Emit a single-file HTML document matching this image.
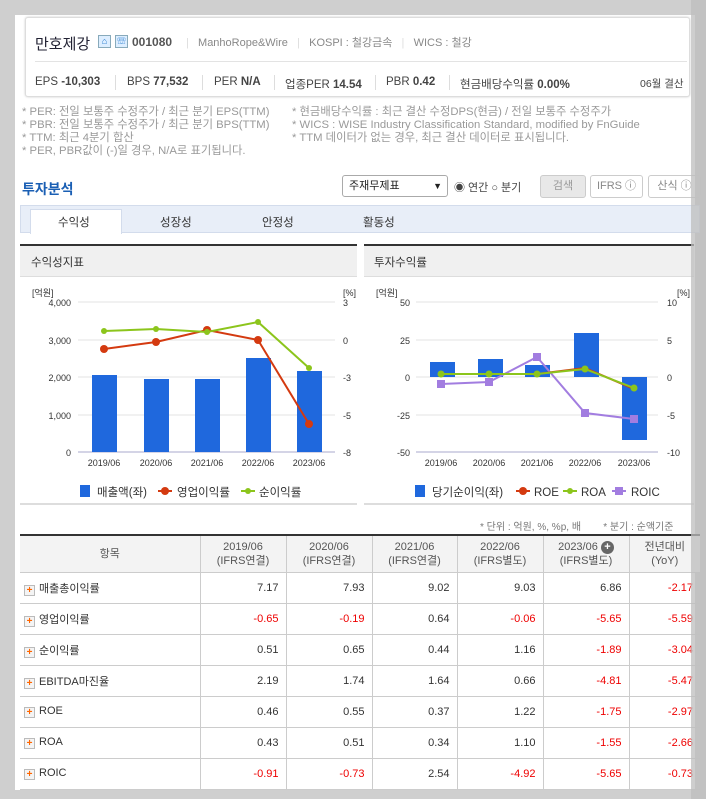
<!DOCTYPE html>
<html><head><meta charset="utf-8"><style>
*{margin:0;padding:0;box-sizing:border-box}
body{width:706px;height:799px;background:#cfcfcf;position:relative;overflow:hidden;font-family:"Liberation Sans","Noto Sans CJK KR",sans-serif;color:#333}
.a{position:absolute;white-space:nowrap}
#wrap{position:absolute;left:15px;top:15px;width:680px;height:775px;background:#fff}
.card{position:absolute;left:25px;top:17px;width:665px;height:80px;border:1px solid #ddd;border-radius:3px;background:#fff;box-shadow:0 0 2px #ccc}
.note{font-size:11.3px;color:#999}
.sep{position:absolute;top:75px;width:1px;height:15px;background:#ddd}
.st{position:absolute;top:76px;font-size:11.5px;color:#444;white-space:nowrap}
table{border-collapse:collapse;position:absolute;left:20px;top:536px;width:680px;font-size:11px}
th{background:#f3f3f3;font-weight:normal;color:#555;border-left:1px solid #ccc;border-bottom:1px solid #ccc;height:36px;line-height:14px}
td{border-left:1px solid #ccc;border-bottom:1px solid #ccc;height:31px;text-align:right;padding-right:7px;color:#333}
td:first-child,th:first-child{border-left:none}
td:first-child{text-align:left;padding-left:4px}
.r{color:#e00}
.pl{display:inline-block;width:11px;height:11px;border:1px solid #bbb;background:#f4f4f4;color:#f60;font-size:10px;line-height:9px;text-align:center;font-weight:bold;margin-right:4px;vertical-align:-1px}
</style></head><body>
<div id="wrap"></div>
<div class="card"></div>
<div class="a" style="left:35px;top:33px;font-size:15px;color:#223">만호제강</div>
<div class="a" style="left:98px;top:35px;width:13px;height:13px;border:1px solid #8ab;background:#def;font-size:9px;color:#27c;text-align:center;line-height:11px">⌂</div>
<div class="a" style="left:115px;top:35px;width:13px;height:13px;border:1px solid #8ab;background:#def;font-size:9px;color:#27c;text-align:center;line-height:11px">☏</div>
<div class="a" style="left:132px;top:35px;font-size:12px;font-weight:bold;color:#555">001080</div>
<div class="a" style="left:186px;top:34px;font-size:11px;color:#888"><span style="color:#ddd">|</span>&nbsp;&nbsp; ManhoRope&amp;Wire &nbsp;&nbsp;<span style="color:#ddd">|</span>&nbsp;&nbsp; KOSPI : 철강금속 &nbsp;&nbsp;<span style="color:#ddd">|</span>&nbsp;&nbsp; WICS : 철강</div>
<div class="a" style="left:35px;top:61px;width:652px;height:1px;background:#e3e3e3"></div>
<div class="st" style="left:35px">EPS <b>-10,303</b></div>
<div class="sep" style="left:115px"></div>
<div class="st" style="left:127px">BPS <b>77,532</b></div>
<div class="sep" style="left:202px"></div>
<div class="st" style="left:214px">PER <b>N/A</b></div>
<div class="sep" style="left:274px"></div>
<div class="st" style="left:285px">업종PER <b>14.54</b></div>
<div class="sep" style="left:375px"></div>
<div class="st" style="left:386px">PBR <b>0.42</b></div>
<div class="sep" style="left:449px"></div>
<div class="st" style="left:460px">현금배당수익률 <b>0.00%</b></div>
<div class="a" style="left:640px;top:76px;font-size:10.5px;color:#444">06월 결산</div>
<div class="a note" style="left:22px;top:106px;line-height:13px">* PER: 전일 보통주 수정주가 / 최근 분기 EPS(TTM)<br>* PBR: 전일 보통주 수정주가 / 최근 분기 BPS(TTM)<br>* TTM: 최근 4분기 합산<br>* PER, PBR값이 (-)일 경우, N/A로 표기됩니다.</div>
<div class="a note" style="left:292px;top:106px;line-height:13px">* 현금배당수익률 : 최근 결산 수정DPS(현금) / 전일 보통주 수정주가<br>* WICS : WISE Industry Classification Standard, modified by FnGuide<br>* TTM 데이터가 없는 경우, 최근 결산 데이터로 표시됩니다.</div>
<div class="a" style="left:22px;top:179px;font-size:14px;font-weight:bold;color:#1a5fb4">투자분석</div>
<div class="a" style="left:342px;top:175px;width:106px;height:22px;border:1px solid #aaa;border-radius:3px;font-size:11px;line-height:20px;padding-left:6px;color:#222">주재무제표<span style="position:absolute;right:5px;font-size:9px">▼</span></div>
<div class="a" style="left:454px;top:179px;font-size:11px;color:#444">◉ 연간 ○ 분기</div>
<div class="a" style="left:540px;top:175px;width:46px;height:23px;border:1px solid #ccc;border-radius:3px;background:#e8e8e8;font-size:11px;color:#999;text-align:center;line-height:21px">검색</div>
<div class="a" style="left:590px;top:175px;width:53px;height:23px;border:1px solid #ccc;border-radius:3px;font-size:11px;color:#888;text-align:center;line-height:21px">IFRS ⓘ</div>
<div class="a" style="left:648px;top:175px;width:53px;height:23px;border:1px solid #ccc;border-radius:3px;font-size:11px;color:#888;text-align:center;line-height:21px">산식 ⓘ</div>
<div class="a" style="left:20px;top:205px;width:680px;height:28px;background:#e8eef8;border:1px solid #d3dcec"></div>
<div class="a" style="left:30px;top:209px;width:92px;height:25px;background:#fff;border:1px solid #d3dcec;border-bottom:none"></div>
<div class="a" style="left:58px;top:214px;font-size:11.5px">수익성</div>
<div class="a" style="left:160px;top:214px;font-size:11.5px">성장성</div>
<div class="a" style="left:262px;top:214px;font-size:11.5px">안정성</div>
<div class="a" style="left:363px;top:214px;font-size:11.5px">활동성</div>
<div class="a" style="left:20px;top:244px;width:337px;height:33px;background:#f0f0f0;border-top:2px solid #333;border-bottom:1px solid #ddd"></div>
<div class="a" style="left:31px;top:254px;font-size:11.5px;color:#333">수익성지표</div>
<div class="a" style="left:364px;top:244px;width:330px;height:33px;background:#f0f0f0;border-top:2px solid #333;border-bottom:1px solid #ddd"></div>
<div class="a" style="left:374px;top:254px;font-size:11.5px;color:#333">투자수익률</div>
<div class="a" style="left:20px;top:503px;width:337px;height:2px;background:#ddd"></div>
<div class="a" style="left:364px;top:503px;width:330px;height:2px;background:#ddd"></div>
<svg class="a" style="left:0;top:0" width="706" height="520" font-family="Liberation Sans" font-size="9" fill="#333">
<g stroke="#e3e3e3"><line x1="78" y1="302" x2="335" y2="302"/><line x1="78" y1="340" x2="335" y2="340"/><line x1="78" y1="377" x2="335" y2="377"/><line x1="78" y1="415" x2="335" y2="415"/></g>
<line x1="78" y1="452" x2="335" y2="452" stroke="#aac"/>
<text x="32" y="296">[억원]</text><text x="343" y="296">[%]</text>
<g text-anchor="end"><text x="71" y="306">4,000</text><text x="71" y="344">3,000</text><text x="71" y="381">2,000</text><text x="71" y="419">1,000</text><text x="71" y="456">0</text></g>
<text x="343" y="306">3</text><text x="343" y="344">0</text><text x="343" y="381">-3</text><text x="343" y="419">-5</text><text x="343" y="456">-8</text>
<g fill="#1f68dd"><rect x="92" y="375" width="25" height="77"/><rect x="144" y="379" width="25" height="73"/><rect x="195" y="379" width="25" height="73"/><rect x="246" y="358" width="25" height="94"/><rect x="297" y="371" width="25" height="81"/></g>
<polyline points="104,349 156,342 207,330 258,340 309,424" fill="none" stroke="#d43a10" stroke-width="2"/>
<g fill="#d43a10"><circle cx="104" cy="349" r="4"/><circle cx="156" cy="342" r="4"/><circle cx="207" cy="330" r="4"/><circle cx="258" cy="340" r="4"/><circle cx="309" cy="424" r="4"/></g>
<polyline points="104,331 156,329 207,332 258,322 309,368" fill="none" stroke="#8cc51c" stroke-width="2"/>
<g fill="#8cc51c"><circle cx="104" cy="331" r="3"/><circle cx="156" cy="329" r="3"/><circle cx="207" cy="332" r="3"/><circle cx="258" cy="322" r="3"/><circle cx="309" cy="368" r="3"/></g>
<g text-anchor="middle"><text x="104" y="466">2019/06</text><text x="156" y="466">2020/06</text><text x="207" y="466">2021/06</text><text x="258" y="466">2022/06</text><text x="309" y="466">2023/06</text></g>
<g font-size="11.5"><rect x="80" y="485" width="10" height="12" fill="#1f68dd"/><text x="97" y="496">매출액(좌)</text>
<line x1="158" y1="491" x2="172" y2="491" stroke="#d43a10" stroke-width="2"/><circle cx="165" cy="491" r="4" fill="#d43a10"/><text x="177" y="496">영업이익률</text>
<line x1="241" y1="491" x2="255" y2="491" stroke="#8cc51c" stroke-width="2"/><circle cx="248" cy="491" r="3" fill="#8cc51c"/><text x="259" y="496">순이익률</text></g>
<g stroke="#e3e3e3"><line x1="416" y1="302" x2="658" y2="302"/><line x1="416" y1="340" x2="658" y2="340"/><line x1="416" y1="377" x2="658" y2="377"/><line x1="416" y1="415" x2="658" y2="415"/></g>
<line x1="416" y1="452" x2="658" y2="452" stroke="#aac"/>
<text x="376" y="296">[억원]</text><text x="677" y="296">[%]</text>
<g text-anchor="end"><text x="410" y="306">50</text><text x="410" y="344">25</text><text x="410" y="381">0</text><text x="410" y="419">-25</text><text x="410" y="456">-50</text></g>
<text x="667" y="306">10</text><text x="667" y="344">5</text><text x="667" y="381">0</text><text x="667" y="419">-5</text><text x="667" y="456">-10</text>
<g fill="#1f68dd"><rect x="430" y="362" width="25" height="15"/><rect x="478" y="359" width="25" height="18"/><rect x="525" y="365" width="25" height="12"/><rect x="574" y="333" width="25" height="44"/><rect x="622" y="377" width="25" height="63"/></g>
<polyline points="441,384 489,382 537,357 585,413 634,419" fill="none" stroke="#a27de0" stroke-width="2"/>
<g fill="#a27de0"><rect x="437" y="380" width="8" height="8"/><rect x="485" y="378" width="8" height="8"/><rect x="533" y="353" width="8" height="8"/><rect x="581" y="409" width="8" height="8"/><rect x="630" y="415" width="8" height="8"/></g>
<polyline points="441,374 489,374 537,374 585,368 634,389" fill="none" stroke="#d43a10" stroke-width="2"/>
<polyline points="441,374 489,374 537,374 585,369 634,388" fill="none" stroke="#8cc51c" stroke-width="2"/>
<g fill="#8cc51c"><circle cx="441" cy="374" r="3.5"/><circle cx="489" cy="374" r="3.5"/><circle cx="537" cy="374" r="3.5"/><circle cx="585" cy="369" r="3.5"/><circle cx="634" cy="388" r="3.5"/></g>
<g text-anchor="middle"><text x="441" y="466">2019/06</text><text x="489" y="466">2020/06</text><text x="537" y="466">2021/06</text><text x="585" y="466">2022/06</text><text x="634" y="466">2023/06</text></g>
<g font-size="11.5"><rect x="415" y="485" width="10" height="12" fill="#1f68dd"/><text x="432" y="496">당기순이익(좌)</text>
<line x1="516" y1="491" x2="530" y2="491" stroke="#d43a10" stroke-width="2"/><circle cx="523" cy="491" r="4" fill="#d43a10"/><text x="534" y="496">ROE</text>
<line x1="563" y1="491" x2="577" y2="491" stroke="#8cc51c" stroke-width="2"/><circle cx="570" cy="491" r="3" fill="#8cc51c"/><text x="581" y="496">ROA</text>
<line x1="612" y1="491" x2="626" y2="491" stroke="#a27de0" stroke-width="2"/><rect x="615" y="487" width="8" height="8" fill="#a27de0"/><text x="631" y="496">ROIC</text></g>
</svg>
<div class="a" style="left:480px;top:518px;font-size:10px;color:#777">* 단위 : 억원, %, %p, 배 &nbsp;&nbsp;&nbsp;&nbsp;&nbsp;&nbsp; * 분기 : 순액기준</div>
<div class="a" style="left:20px;top:534px;width:680px;height:3px;background:#333"></div>
<table>
<tr><th style="width:180px">항목</th><th style="width:86px">2019/06<br>(IFRS연결)</th><th style="width:86px">2020/06<br>(IFRS연결)</th><th style="width:85px">2021/06<br>(IFRS연결)</th><th style="width:86px">2022/06<br>(IFRS별도)</th><th style="width:86px">2023/06 <span style="display:inline-block;width:13px;height:13px;border-radius:50%;background:#666;color:#fff;font-size:11px;line-height:13px;text-align:center;font-weight:bold">+</span><br>(IFRS별도)</th><th>전년대비<br>(YoY)</th></tr>
<tr><td><span class="pl">+</span>매출총이익률</td><td>7.17</td><td>7.93</td><td>9.02</td><td>9.03</td><td>6.86</td><td class="r">-2.17</td></tr>
<tr><td><span class="pl">+</span>영업이익률</td><td class="r">-0.65</td><td class="r">-0.19</td><td>0.64</td><td class="r">-0.06</td><td class="r">-5.65</td><td class="r">-5.59</td></tr>
<tr><td><span class="pl">+</span>순이익률</td><td>0.51</td><td>0.65</td><td>0.44</td><td>1.16</td><td class="r">-1.89</td><td class="r">-3.04</td></tr>
<tr><td><span class="pl">+</span>EBITDA마진율</td><td>2.19</td><td>1.74</td><td>1.64</td><td>0.66</td><td class="r">-4.81</td><td class="r">-5.47</td></tr>
<tr><td><span class="pl">+</span>ROE</td><td>0.46</td><td>0.55</td><td>0.37</td><td>1.22</td><td class="r">-1.75</td><td class="r">-2.97</td></tr>
<tr><td><span class="pl">+</span>ROA</td><td>0.43</td><td>0.51</td><td>0.34</td><td>1.10</td><td class="r">-1.55</td><td class="r">-2.66</td></tr>
<tr><td><span class="pl">+</span>ROIC</td><td class="r">-0.91</td><td class="r">-0.73</td><td>2.54</td><td class="r">-4.92</td><td class="r">-5.65</td><td class="r">-0.73</td></tr>
</table>
<div class="a" style="left:0;top:0;width:706px;height:15px;background:#cfcfcf"></div>
<div class="a" style="left:0;top:0;width:15px;height:799px;background:#cfcfcf"></div>
<div class="a" style="left:0;top:790px;width:706px;height:9px;background:#cfcfcf"></div>
<div class="a" style="left:691px;top:0;width:15px;height:799px;background:rgba(190,190,190,0.75)"></div>
</body></html>
